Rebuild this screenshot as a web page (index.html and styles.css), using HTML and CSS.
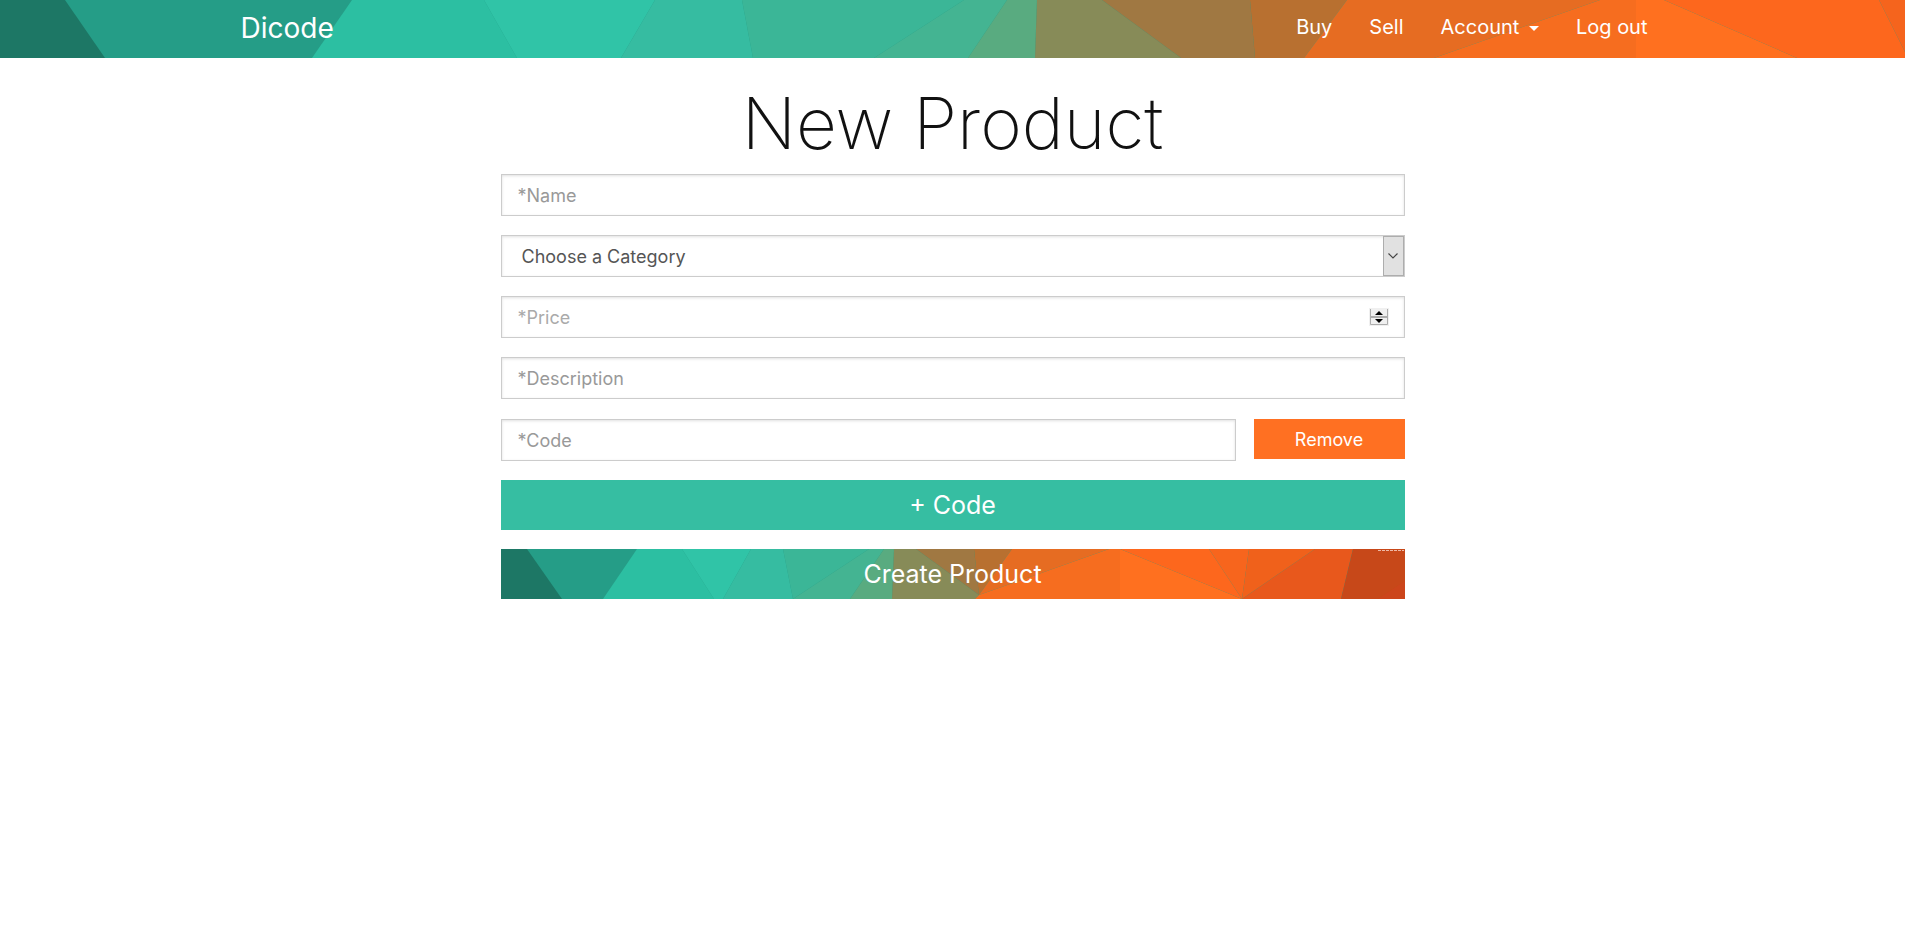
FILE: index.html
```
<!DOCTYPE html>
<html lang="en">
<head>
    <meta charset="UTF-8">
    <meta name="viewport" content="width=device-width, initial-scale=1.0">
    <title>Dicode - New Product</title>
    <link rel="stylesheet" href="styles.css">
</head>
<body>

    <!-- Navbar -->
    <header class="navbar">
        <svg class="poly-bg" viewBox="0 0 1905 58" preserveAspectRatio="none" aria-hidden="true">
            <rect width="1905" height="58" fill="#259d87"/>
            <path fill="#1d7765" d="M0 0H65L105 58H0z"/>
            <path fill="#2cbfa2" d="M352 0H484L517 58H312z"/>
            <path fill="#30c4a7" d="M484 0H655L621 58H517z"/>
            <path fill="#36bca1" d="M655 0H742L753 58H621z"/>
            <path fill="#3bb697" d="M742 0H964L874 58H753z"/>
            <path fill="#44b492" d="M964 0H1007L968 58H874z"/>
            <path fill="#59ab80" d="M1007 0H1037L1035 58H968z"/>
            <path fill="#878b58" d="M1037 0H1102L1181 58H1035z"/>
            <path fill="#a07842" d="M1102 0H1250L1255 58H1181z"/>
            <path fill="#b87030" d="M1250 0H1347L1304 58H1255z"/>
            <path fill="#e66c22" d="M1347 0H1600L1434 58H1304z"/>
            <path fill="#f66d1f" d="M1600 0H1636V58H1434z"/>
            <path fill="#ff701f" d="M1636 0H1664L1797 58H1636z"/>
            <path fill="#fd671d" d="M1664 0H1879L1905 52V58H1797z"/>
            <path fill="#f5641d" d="M1879 0H1905V52z"/>
        </svg>
        <div class="container">
            <a class="brand" href="#">Dicode</a>
            <nav class="nav-links">
                <a href="#">Buy</a>
                <a href="#">Sell</a>
                <a href="#">Account <span class="caret"></span></a>
                <a href="#">Log out</a>
            </nav>
        </div>
    </header>

    <!-- New Product Form -->
    <main class="product">
        <h1>New Product</h1>
        <form class="product-form">
            <input class="form-control" type="text" aria-label="Name" placeholder="*Name">
            <div class="select-box">
                <select class="form-control" aria-label="Category">
                    <option>Choose a Category</option>
                </select>
                <span class="select-arrow">
                    <svg width="10" height="6" viewBox="0 0 10 6" aria-hidden="true"><path d="M0.500 0.500L5 5L9.500 0.500" fill="none" stroke="#444" stroke-width="1.2"/></svg>
                </span>
            </div>
            <div class="number-box">
                <input class="form-control" type="number" aria-label="Price" placeholder="*Price">
                <svg class="spinner" width="20" height="18" viewBox="0 0 20 18" aria-hidden="true">
                    <rect width="20" height="18" fill="#f0f0f0"/>
                    <path d="M1.500 1V16.500H18.500V1" fill="none" stroke="#adadad"/>
                    <path d="M1 9H19" stroke="#adadad" stroke-width="2"/>
                    <path d="M6 7L10 3L14 7zM6 11H14L10 15z" fill="#000"/>
                </svg>
            </div>
            <input class="form-control" type="text" aria-label="Description" placeholder="*Description">
            <div class="code-row">
                <input class="form-control" type="text" aria-label="Code" placeholder="*Code">
                <button class="btn btn-remove" type="button">Remove</button>
            </div>
            <button class="btn btn-add" type="button">+ Code</button>
            <button class="btn btn-create" type="submit">
                <svg class="poly-bg" viewBox="0 0 904 50" preserveAspectRatio="none" aria-hidden="true">
                    <rect width="904" height="50" fill="#259d87"/>
                    <path fill="#1d7765" d="M0 0H26L61 50H0z"/>
                    <path fill="#2cbfa2" d="M136 0H181L213 50H102z"/>
                    <path fill="#30c4a7" d="M181 0H250L222 50H213z"/>
                    <path fill="#36bca1" d="M250 0H282L292 50H222z"/>
                    <path fill="#3bb697" d="M282 0H368L292 50z"/>
                    <path fill="#44b492" d="M368 0H383L349 50H292z"/>
                    <path fill="#59ab80" d="M383 0H393L391 50H349z"/>
                    <path fill="#878b58" d="M393 0H415L478 46L474 50H391z"/>
                    <path fill="#a07842" d="M415 0H473L478 46z"/>
                    <path fill="#b87030" d="M473 0H511L478 46z"/>
                    <path fill="#e66c22" d="M511 0H608L478 46z"/>
                    <path fill="#f66d1f" d="M608 0H619V50H474L478 46z"/>
                    <path fill="#ff701f" d="M619 0L741 50H619z"/>
                    <path fill="#fd671d" d="M619 0H708L741 50z"/>
                    <path fill="#f7651d" d="M708 0H748L741 50z"/>
                    <path fill="#f0611b" d="M748 0H814L741 50z"/>
                    <path fill="#e8581c" d="M814 0H852L840 50H741z"/>
                    <path fill="#c74819" d="M852 0H904V50H840z"/>
                    <path fill="#cc451b" d="M904 32V50H877z"/>
                    <path stroke="#eeb9a6" stroke-dasharray="3 1" d="M877 1.500H903"/>
                </svg>
                <span>Create Product</span>
            </button>
        </form>
    </main>

</body>
</html>
```
FILE: styles.css
```
* {
    box-sizing: border-box;
}

body {
    margin: 0;
    background-color: #fff;
    color: #111;
    font-family: Inter, "Open Sans", sans-serif;
    font-size: 18px;
}

/* Navbar */
.navbar {
    position: relative;
    height: 58px;
}

.poly-bg {
    position: absolute;
    top: 0;
    left: 0;
    width: 100%;
    height: 100%;
}

.container {
    position: relative;
    display: flex;
    justify-content: space-between;
    max-width: 1440px;
    height: 100%;
    margin: 0 auto;
    padding: 0 25px 0 8px;
}

.brand,
.nav-links a {
    color: #fff;
    text-decoration: none;
}

.brand {
    font-size: 28px;
    line-height: 56px;
}

.nav-links {
    display: flex;
    gap: 37px;
    font-size: 20px;
    line-height: 54px;
}

.caret {
    display: inline-block;
    margin-left: 4px;
    border-top: 5px solid #fff;
    border-left: 5px solid transparent;
    border-right: 5px solid transparent;
    vertical-align: middle;
}

/* Product Form */
.product {
    max-width: 904px;
    margin: 0 auto;
}

.product h1 {
    margin: 28px 0 14px;
    font-size: 71px;
    font-weight: 200;
    line-height: 74px;
    text-align: center;
}

.product-form {
    display: flex;
    flex-direction: column;
    gap: 19px;
}

.form-control {
    display: block;
    width: 100%;
    height: 42px;
    padding: 6px 16px;
    border: 1px solid #ccc;
    border-radius: 0;
    background-color: #fff;
    box-shadow: inset 0 1px 3px rgba(0, 0, 0, 0.12);
    color: #555;
    font-family: inherit;
    font-size: 18px;
}

.form-control::placeholder {
    color: #999;
}

/* Select and number inputs with their own arrows */
.select-box,
.number-box {
    position: relative;
}

.select-box .form-control {
    padding-left: 20px;
    appearance: none;
}

.select-arrow {
    position: absolute;
    top: 1px;
    right: 1px;
    bottom: 1px;
    display: flex;
    align-items: center;
    justify-content: center;
    width: 21px;
    border: 1px solid #adadad;
    background-color: #e1e1e1;
    pointer-events: none;
}

.number-box input {
    appearance: textfield;
}

.number-box input::placeholder {
    color: #aaa;
}

.spinner {
    position: absolute;
    top: 12px;
    right: 16px;
    pointer-events: none;
}

.code-row {
    display: flex;
    align-items: flex-start;
    gap: 18px;
    padding-top: 1px;
}

.code-row .form-control {
    flex: 1;
}

/* Buttons */
.btn {
    position: relative;
    height: 50px;
    padding: 0;
    border: 0;
    color: #fff;
    font-family: inherit;
    font-size: 25px;
    cursor: pointer;
}

.btn span {
    position: relative;
}

.btn-remove {
    width: 151px;
    height: 40px;
    background-color: #ff7022;
    font-size: 18px;
}

.btn-add {
    background-color: #36bea2;
}
```
